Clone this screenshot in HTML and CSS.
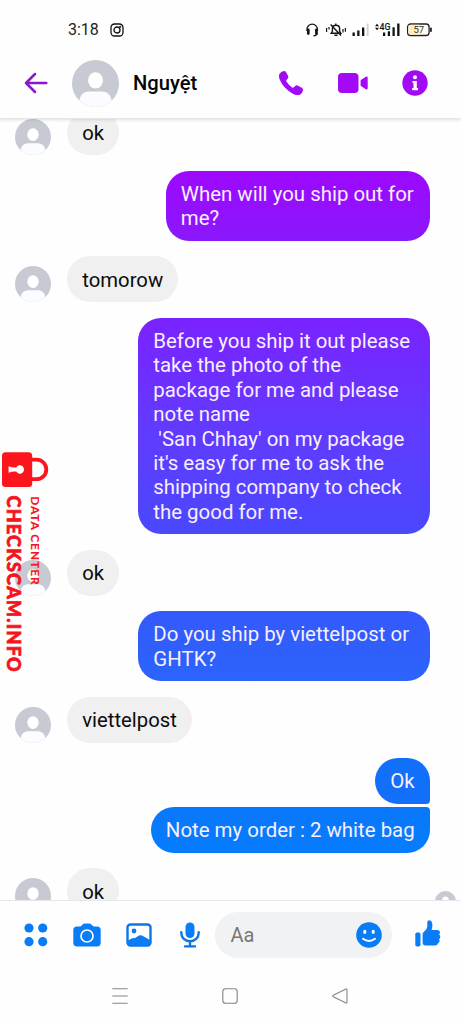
FILE: index.html
```
<!DOCTYPE html>
<html lang="en">
<head>
<meta charset="utf-8">
<title>Nguyệt</title>
<link rel="stylesheet" href="styles.css">
</head>
<body>
<svg class="defs" aria-hidden="true">
  <defs>
    <clipPath id="disc"><circle cx="18" cy="18" r="18"/></clipPath>
    <symbol id="person" viewBox="0 0 36 36">
      <g clip-path="url(#disc)">
        <rect width="36" height="36" fill="#c8cad3"/>
        <ellipse cx="18" cy="15.6" rx="5.7" ry="6.3" fill="#fff"/>
        <path d="M5.5 31Q7 24.2 13 24.2H23Q29 24.2 30.5 31L31 37H5Z" fill="#fbfcff"/>
      </g>
    </symbol>
  </defs>
</svg>
<div class="phone">
  <div class="status">
    <span class="time">3:18</span>
    <svg class="insta" viewBox="0 0 14 14" fill="none" stroke="#111" stroke-width="1.3"><rect x="1" y="1" width="12" height="12" rx="3.5"/><circle cx="7" cy="7" r="3"/><circle cx="10.3" cy="3.7" r=".4"/></svg>
    <svg class="indicators" viewBox="0 0 130 20">
      <g fill="none" stroke="#151515" stroke-width="1.4">
        <path d="M2 11V9.3A5.2 5.2 0 0 1 12.4 9.3V11M12.2 13Q12 15.8 8.5 15.8"/>
        <path d="M3.3 9.8V13.6M11.4 9.8V13.6" stroke-width="2.7" stroke-linecap="round"/>
        <path d="M26.2 13.2H35.8L34.6 11.3V8.5Q34.6 5.2 31 5.2T27.4 8.5V11.3ZM29.4 15.2H32.6M30.8 3.5V5.2M25.6 4.6L36 15.4"/>
        <path d="M21.6 8V12M24 6.9V9.5M38 9V12.5M40.4 8V11.8" stroke-width="1.2"/>
      </g>
      <g fill="#111"><rect x="47.5" y="12.5" width="2.3" height="3.5"/><rect x="52.2" y="10.5" width="2.3" height="5.5"/><rect x="57" y="7.5" width="2.3" height="8.5"/>
      <rect x="78" y="12.5" width="2.2" height="3.5"/><rect x="82.8" y="11.3" width="2.2" height="4.7"/><rect x="87.5" y="7.3" width="2.2" height="8.7"/><rect x="92.2" y="3.5" width="2.3" height="12.5"/>
      <path d="M70 6.2L72 3.8L74 6.2ZM70 7.8L72 10.2L74 7.8Z"/></g>
      <rect x="61.8" y="3.5" width="1.8" height="12.5" fill="#d2d2d2"/>
      <text class="net" x="74.5" y="9.8" textLength="11" lengthAdjust="spacingAndGlyphs">4G</text>
      <rect x="102.6" y="4" width="21.5" height="11.5" rx="3" fill="#fffdf3" stroke="#222" stroke-width="1.3"/>
      <path d="M105.8 4.7H114.5V14.8H105.8Q103.3 14.8 103.3 12.5V7Q103.3 4.7 105.8 4.7Z" fill="#fbeec0"/>
      <rect x="125" y="7.5" width="1.8" height="4.5" rx=".8" fill="#222"/>
      <text class="pct" x="108.4" y="13.3">57</text>
    </svg>
  </div>

  <header class="header">
    <svg class="back" viewBox="0 0 24 22" fill="none" stroke="#8a17cb" stroke-width="2.5" stroke-linecap="round" stroke-linejoin="round"><path d="M22.3 11H2M11 2L2 11L11 20"/></svg>
    <svg class="face"><use href="#person"/></svg>
    <h1 class="name">Nguyệt</h1>
    <svg class="call" viewBox="0 0 24 24"><path fill="#a209f5" d="M.4 3.1Q2.2.2 5.2.1Q6.5.1 7.2 1.4L9 4.8Q9.8 6.3 8.8 7.4L7.5 9Q6.9 9.7 7.4 10.6Q9.5 14 13.1 16.4Q14 17 14.8 16.2L16.4 14.8Q17.4 14 18.6 14.6L22.8 16.8Q24.2 17.6 24 19.2Q23.6 22.3 20.8 23.7Q17.6 25 13.4 22.5Q4.2 17 .8 8.8Q-.6 5.3.4 3.1Z"/></svg>
    <svg class="video" viewBox="0 0 30 20"><rect width="20.5" height="20" rx="4" fill="#a209f5"/><path fill="#a209f5" d="M22.6 7.3L27.8 3.8Q29.7 3 29.7 5V15Q29.7 17 27.8 16.2L22.6 12.7Z"/></svg>
    <svg class="info" viewBox="0 0 26 26"><circle cx="13" cy="13" r="12.7" fill="#a209f5"/><circle cx="13" cy="7.3" r="2" fill="#fff"/><path fill="#fff" d="M10.5 11H14.8V18H16V20.2H10.2V18H11.5V13H10.5Z"/></svg>
  </header>

  <main class="thread">
    <div class="row"><svg class="avatar"><use href="#person"/></svg><p class="bubble in">ok</p></div>
    <div class="row me"><p class="bubble out c1">When will you ship out for
me?</p></div>
    <div class="row"><svg class="avatar"><use href="#person"/></svg><p class="bubble in">tomorow</p></div>
    <div class="row me"><p class="bubble out c2">Before you ship it out please
take the photo of the
package for me and please
note name
 'San Chhay' on my package
it's easy for me to ask the
shipping company to check
the good for me.</p></div>
    <div class="row"><svg class="avatar"><use href="#person"/></svg><p class="bubble in">ok</p></div>
    <div class="row me"><p class="bubble out c3">Do you ship by viettelpost or
GHTK?</p></div>
    <div class="row"><svg class="avatar"><use href="#person"/></svg><p class="bubble in">viettelpost</p></div>
    <div class="row me first"><p class="bubble out c4">Ok</p></div>
    <div class="row me"><p class="bubble out c5">Note my order : 2 white bag</p></div>
    <div class="row"><svg class="avatar"><use href="#person"/></svg><p class="bubble in">ok</p><svg class="seen"><use href="#person"/></svg></div>
  </main>

  <footer class="composer">
    <svg class="dots" viewBox="0 0 24 24" fill="#0a7cf5"><circle cx="5" cy="5" r="4.6"/><circle cx="18.7" cy="5" r="4.6"/><circle cx="5" cy="18.7" r="4.6"/><circle cx="18.7" cy="18.7" r="4.6"/></svg>
    <svg class="camera" viewBox="0 0 28 24"><path fill="#0a7cf5" d="M4 3.6H6.7Q7.8 3.6 8.6 2.5Q10.2.5 11.8.5H16.2Q17.8.5 19.4 2.5Q20.2 3.6 21.3 3.6H24Q27.7 3.6 27.7 7.3V19.7Q27.7 23.4 24 23.4H4Q.3 23.4.3 19.7V7.3Q.3 3.6 4 3.6Z"/><circle cx="14" cy="13" r="6" fill="#0a7cf5" stroke="#fff" stroke-width="1.7"/></svg>
    <svg class="photo" viewBox="0 0 26 24"><rect x="1.5" y="1.5" width="23" height="21" rx="3" fill="#fff" stroke="#0a76e8" stroke-width="2.4"/><circle cx="8" cy="8" r="2.4" fill="#0a7cf5"/><path fill="#0a7cf5" d="M2 17.5L5.5 15.5Q7.5 14.6 9 15L13 12.6Q14.5 11.8 16 12.6L24 17V20Q24 22.3 21.5 22.3H4.3Q2 22.3 2 20Z"/></svg>
    <svg class="mic" viewBox="0 0 20 26"><rect x="5.5" y=".4" width="9" height="15.6" rx="4.5" fill="#0a7cf5"/><path d="M1.3 10.2V11A8.7 8.2 0 0 0 18.7 11V10.2M10 19.5V24M5 24.4H15" fill="none" stroke="#0a76e2" stroke-width="2.4" stroke-linecap="round"/></svg>
    <div class="field"><span>Aa</span>
      <svg class="smile" viewBox="0 0 26 26"><circle cx="13" cy="13" r="12.8" fill="#0a7cf5"/><ellipse cx="8.8" cy="9.9" rx="1.6" ry="2.1" fill="#fff"/><ellipse cx="17.2" cy="9.9" rx="1.6" ry="2.1" fill="#fff"/><path d="M7 16.8Q13 21.2 19 16.8" fill="none" stroke="#fff" stroke-width="1.9" stroke-linecap="round"/></svg>
    </div>
    <svg class="like" viewBox="0 0 26 27" fill="#0a7cf5"><rect x=".3" y="12.6" width="5.2" height="13.9" rx="1.7"/><path d="M7.6 14.2Q7.6 13 8.7 12.1Q12.4 8.9 12.3 5.4V2.3Q12.4.4 14.2.3Q17.3.5 17.4 5.3Q17.4 8 16.5 9.9H22.5Q25 10 25 12.3Q25 13.8 24 14.5Q25.5 15.2 25.3 17Q25.2 18.5 24 19.2Q24.9 20.1 24.5 21.6Q24.1 22.9 22.9 23.3Q22.6 25.5 19.5 25.6H12.2Q7.6 25.7 7.6 22.7Z"/></svg>
  </footer>

  <nav class="nav">
    <svg viewBox="0 0 16 16"><path d="M.3 .8H15.7M.3 8H15.7M.3 15.2H15.7"/></svg>
    <svg viewBox="0 0 16 16"><rect x=".8" y=".8" width="14.4" height="14.4" rx="2.8"/></svg>
    <svg viewBox="0 0 16 16"><path d="M14 1L1.3 7.3Q.2 8 1.3 8.7L14 15Q15 15.3 15 14.3V1.7Q15 .7 14 1Z"/></svg>
  </nav>

  <svg class="watermark" viewBox="0 0 50 224">
    <path d="M31 7.6H36.5A9.8 9.8 0 0 1 36.5 27.2H31" fill="none" stroke="#fb151c" stroke-width="3.8"/>
    <rect x="2" y=".3" width="30.2" height="34.6" rx="3.5" fill="#fb151c"/>
    <path fill="#fff" d="M8.6 14.2Q12.5 15.8 16.2 15.4A4.2 4.2 0 1 1 16.2 19.6Q12.5 19.2 8.6 20.8Z"/>
    <text class="site" transform="translate(7.3 43.6) rotate(90)" textLength="176">CHECKSCAM.INFO</text>
    <text class="dc" transform="translate(30.5 44.2) rotate(90)" textLength="88.5">DATA CENTER</text>
  </svg>
</div>
</body>
</html>
```
FILE: styles.css
```
* { box-sizing: border-box; }
body { margin: 0; background: #fff; font-family: Roboto, "Liberation Sans", sans-serif; color: #0c0c0c; }
svg { display: block; flex: none; }
.defs { position: absolute; width: 0; height: 0; }
.phone { position: relative; width: 461px; height: 1024px; overflow: hidden; display: flex; flex-direction: column; background: #fefefe; }

.status { height: 50px; flex: none; display: flex; align-items: center; padding: 9px 0 0 68px; }
.time { width: 42px; font-size: 16px; color: #222; }
.insta { width: 14px; height: 14px; }
.indicators { width: 130px; height: 20px; margin-left: 181px; }
.net { font-size: 8.5px; font-weight: 500; fill: #111; }
.pct { font-size: 9.5px; fill: #333; }

.header { height: 69px; flex: none; display: flex; align-items: center; padding: 0 33px 2px 24px; background: #fefefe; border-bottom: 1px solid #e5e5e5; box-shadow: 0 1px 3px rgba(0,0,0,.12); clip-path: inset(0 0 -6px 0); z-index: 1; }
.back { width: 24px; height: 22px; }
.face { width: 47px; height: 47px; margin-left: 23.5px; }
.name { margin: 0 0 0 14.5px; width: 146px; font-size: 20.2px; line-height: 26px; font-weight: 500; color: #050505; }
.call { width: 24px; height: 24px; }
.video { width: 30px; height: 20px; margin-left: 34.5px; }
.info { width: 26px; height: 26px; margin-left: auto; }

.thread { height: 781px; flex: none; overflow: hidden; display: flex; flex-direction: column; gap: 15.4px; }
.thread .row:first-child { margin-top: -9.5px; }
.row { display: flex; align-items: flex-end; flex: none; padding-left: 15px; padding-right: 31px; }
.row.me { justify-content: flex-end; }
.row.first { margin-bottom: -12.3px; }
.avatar { width: 36px; height: 36px; margin-right: 16px; }
.bubble { margin: 0; padding: 11.3px 15.3px 10.2px; border-radius: 23px; font-size: 20.3px; line-height: 24.4px; white-space: pre; }
.in { background: #f0f0f0; }
.out { color: #f8efff; font-size: 20.43px; }
.c1 { width: 264.5px; background: linear-gradient(#9d08ff, #8a18fc); }
.c2 { width: 292px; background: linear-gradient(#7a22ff, #623aff 50%, #4a48fe); }
.c3 { width: 292px; background: linear-gradient(#3559fb, #2b64fc); }
.c4 { background: #126ff9; border-bottom-right-radius: 4px; }
.c5 { background: linear-gradient(#0a77fa, #067dfe); border-top-right-radius: 4px; }
.seen { width: 21px; height: 21px; margin-left: auto; margin-right: -26px; margin-bottom: 2px; }

.composer { height: 68px; flex: none; display: flex; align-items: center; padding-left: 24px; border-top: 1px solid #e6e7ea; background: #fefefe; }
.dots { width: 24px; height: 24px; }
.camera { width: 28px; height: 24px; margin-left: 25px; }
.photo { width: 26px; height: 24px; margin-left: 24.5px; }
.mic { width: 20px; height: 26px; margin-left: 28px; }
.field { width: 177px; height: 46px; margin-left: 15.5px; border-radius: 23px; background: #f1f2f4; display: flex; align-items: center; justify-content: space-between; padding: 0 10px 0 15.5px; font-size: 20px; color: #777; }
.smile { width: 26px; height: 26px; }
.like { width: 26px; height: 27px; margin-left: 23px; margin-top: -2px; }

.nav { display: flex; justify-content: center; gap: 94px; padding: 20px 1px 0 0; }
.nav svg { width: 16px; height: 16px; fill: none; stroke: #858585; stroke-width: 1.1; }

/* Stamp printed over the conversation */
.watermark { position: absolute; left: 0; top: 452px; width: 50px; height: 224px; z-index: 2; }
.site, .dc { font-family: Lato, "Open Sans", sans-serif; fill: #f6141c; stroke: #f6141c; }
.site { font-size: 18px; font-weight: 900; stroke-width: .7px; }
.dc { font-size: 12px; font-weight: 700; stroke-width: .1px; }
```
